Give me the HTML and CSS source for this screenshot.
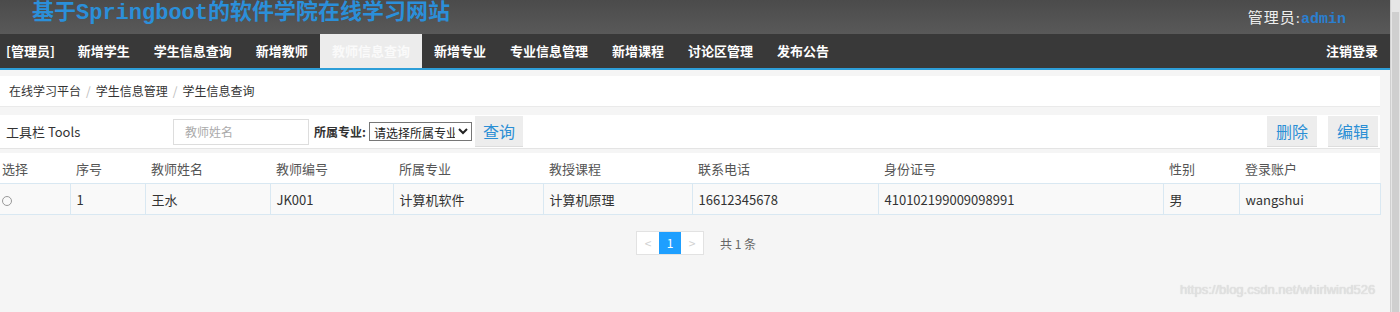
FILE: index.html
```html
<!DOCTYPE html>
<html lang="zh-CN">
<head>
  <meta charset="UTF-8">
  <title>基于Springboot的软件学院在线学习网站</title>
  <link rel="stylesheet" href="styles.css">
</head>
<body>
  <div class="screen">
    <div class="app">
      <div class="top">
        <div class="site-title">基于Springboot的软件学院在线学习网站</div>
        <div class="user">管理员:<span class="user-name">admin</span></div>
      </div>
      <div class="nav">
        <a class="nav-item first">[管理员]</a>
        <a class="nav-item">新增学生</a>
        <a class="nav-item">学生信息查询</a>
        <a class="nav-item">新增教师</a>
        <a class="nav-item active">教师信息查询</a>
        <a class="nav-item">新增专业</a>
        <a class="nav-item">专业信息管理</a>
        <a class="nav-item">新增课程</a>
        <a class="nav-item">讨论区管理</a>
        <a class="nav-item">发布公告</a>
        <a class="nav-item logout">注销登录</a>
      </div>
      <div class="content">
        <div class="crumbs">
          <span>在线学习平台</span><span class="sep">/</span><span>学生信息管理</span><span class="sep">/</span><span>学生信息查询</span>
        </div>
        <div class="toolbar">
          <span class="tb-title">工具栏 Tools</span>
          <input class="tb-input" type="text" placeholder="教师姓名">
          <label class="tb-label">所属专业:</label>
          <select class="tb-select"><option>请选择所属专业</option></select>
          <button class="btn">查询</button>
          <div class="tb-right">
            <button class="btn">删除</button>
            <button class="btn">编辑</button>
          </div>
        </div>
        <table class="grid">
          <colgroup>
            <col style="width:70px"><col style="width:75px"><col style="width:125px"><col style="width:123px"><col style="width:150px">
            <col style="width:149px"><col style="width:186px"><col style="width:285px"><col style="width:76px"><col style="width:141px">
          </colgroup>
          <thead>
            <tr><th>选择</th><th>序号</th><th>教师姓名</th><th>教师编号</th><th>所属专业</th><th>教授课程</th><th>联系电话</th><th>身份证号</th><th>性别</th><th>登录账户</th></tr>
          </thead>
          <tbody>
            <tr><td><span class="radio"></span></td><td>1</td><td>王水</td><td>JK001</td><td>计算机软件</td><td>计算机原理</td><td>16612345678</td><td>410102199009098991</td><td>男</td><td>wangshui</td></tr>
          </tbody>
        </table>
        <div class="pager">
          <div class="pages">
            <span class="page disabled">&lt;</span><span class="page current">1</span><span class="page disabled">&gt;</span>
          </div>
          <span class="count">共 1 条</span>
        </div>
      </div>
    </div>
    <div class="scrollbar"><div class="arrow"></div><div class="thumb"></div></div>
  </div>
  <div class="watermark">https://blog.csdn.net/whirlwind526</div>
</body>
</html>
```
FILE: styles.css
```css
body { margin: 0; font-family: "Noto Sans CJK SC", "Noto Sans", sans-serif; background: #f5f5f5; color: #333; }
.screen { display: flex; width: 1400px; height: 312px; overflow: hidden; }
.app { width: 1390px; }
.scrollbar { width: 10px; background: #e6e6e6; border-left: 1px solid #d0d0d0; }
.scrollbar .arrow { height: 12px; }
.scrollbar .thumb { margin: 0 1px; height: 300px; background: #cfcfcf; }

.top { height: 34px; display: flex; align-items: center; justify-content: space-between; background: linear-gradient(#4b4b4b, #595959); padding: 0 44px 0 32px; }
.site-title { font-family: "Liberation Mono", "Noto Sans CJK SC", monospace; font-size: 22px; font-weight: bold; color: #2b8fd9; line-height: 28px; margin-top: -6px; }
.user { font-family: "Liberation Serif", "Noto Sans CJK SC", serif; font-size: 15px; color: #eee; letter-spacing: 1px; }
.user-name { font-family: "Liberation Mono", monospace; color: #2b7fd0; font-weight: bold; letter-spacing: 0; }

.nav { display: flex; height: 34px; background: #393939; border-bottom: 2px solid #2d9ed8; }
.nav-item { padding: 0 12px; line-height: 34px; font-size: 13px; font-weight: bold; color: #fff; white-space: nowrap; }
.nav-item.first { padding: 0 11px 0 6px; }
.nav-item.active { background: #ececec; color: #fafafa; }
.nav-item.logout { margin-left: auto; padding-right: 12px; }

.content { padding: 6px 10px 0 0; }
.crumbs { height: 30px; line-height: 30px; background: #fff; padding-left: 9px; font-size: 12px; color: #333; border-bottom: 1px solid #eaeaea; }
.crumbs .sep { color: #bbb; padding: 0 5px; }

.toolbar { display: flex; align-items: center; height: 33px; margin-top: 8px; background: #fff; border-bottom: 1px solid #e4e4e4; }
.tb-title { font-size: 13px; padding-left: 6px; width: 167px; }
.tb-input { width: 136px; height: 26px; box-sizing: border-box; border: 1px solid #ddd; padding: 0 11px; font-size: 12px; font-family: inherit; }
.tb-input::placeholder { color: #aaa; }
.tb-label { font-size: 12px; font-weight: bold; margin-left: 5px; }
.tb-select { width: 103px; height: 19px; margin-left: 3px; font-size: 12px; font-family: inherit; border: 1px solid #777; padding: 0; background: #fff; color: #222; }
.btn { height: 31px; padding: 0 8px; margin-left: 3px; border: 0; border-bottom: 1px solid #ddd; background: #ededed; color: #2b8fd5; font-size: 16px; font-family: inherit; }
.tb-right { margin-left: auto; margin-right: 2px; display: flex; gap: 8px; }
.tb-right .btn { padding: 0 9px; }

.grid { width: 1380px; border-collapse: collapse; table-layout: fixed; margin-top: 4px; font-size: 13px; }
.grid th { height: 30px; padding: 0 6px; text-align: left; font-weight: normal; color: #555; background: #fff; }
.grid td { height: 30px; padding: 0 6px; background: #f9f9f9; border: 1px solid #d9e8f2; }
.grid th:first-child, .grid td:first-child { padding-left: 2px; }
.grid td:first-child { border-left: 0; }
.radio { display: inline-block; width: 8px; height: 8px; border: 1px solid #999; border-radius: 50%; vertical-align: middle; }

.pager { display: flex; justify-content: center; align-items: center; margin-top: 16px; padding-left: 12px; }
.pages { display: flex; border: 1px solid #e2e2e2; background: #fff; }
.page { width: 22px; height: 22px; line-height: 22px; text-align: center; font-size: 12px; }
.page.disabled { color: #d2d2d2; }
.page.current { background: #1e9fff; color: #fff; }
.count { margin-left: 16px; font-size: 12px; color: #666; }

.watermark { position: absolute; left: 1180px; top: 282px; font-family: "Liberation Sans", sans-serif; font-size: 13px; color: #e2e2e2; text-shadow: 0 0 1px #c8c8c8; }
```
